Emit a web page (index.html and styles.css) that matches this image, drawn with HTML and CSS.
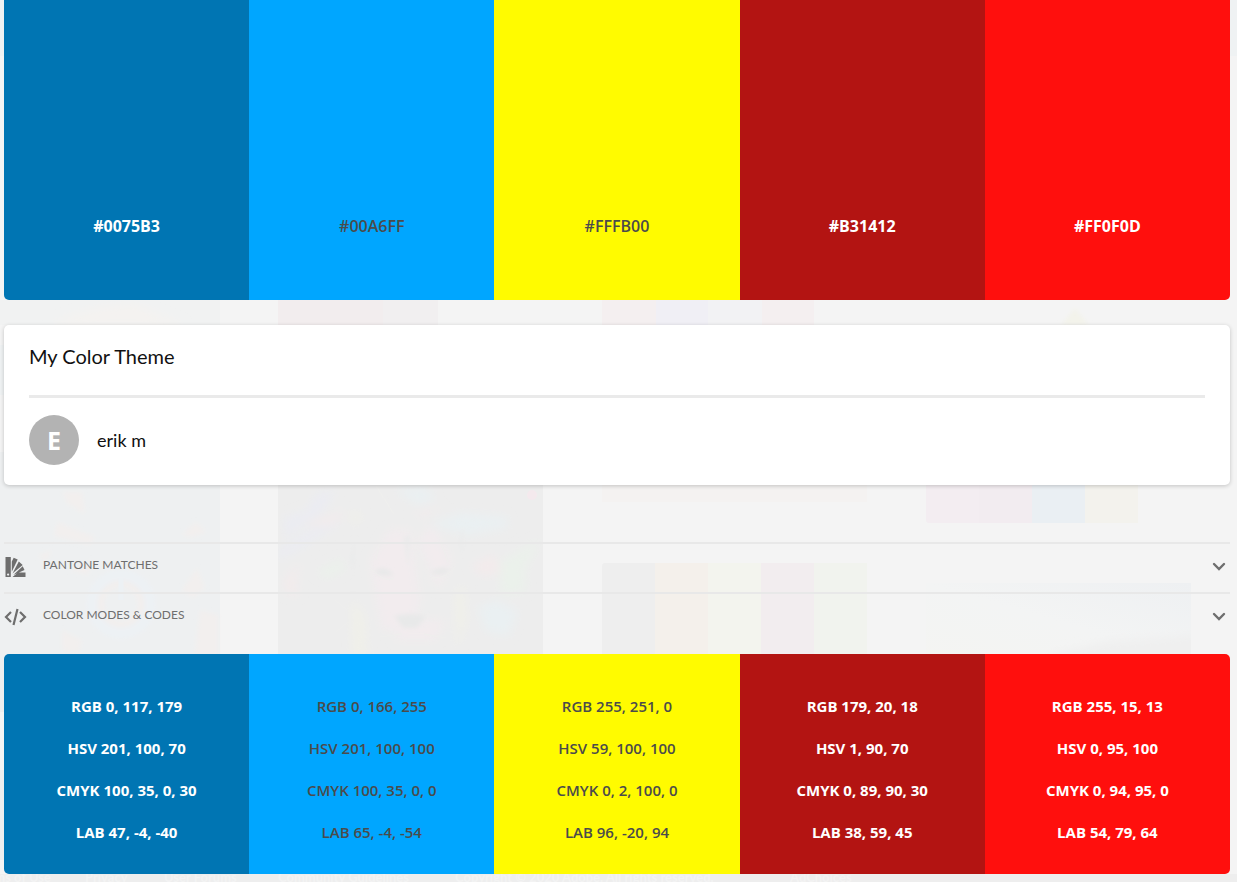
FILE: index.html
```
<!DOCTYPE html>
<html lang="en">
<head>
<meta charset="utf-8">
<title>My Color Theme</title>
<link rel="stylesheet" href="styles.css">
</head>
<body>
<svg class="backdrop" width="1237" height="882" viewBox="0 0 1237 882" aria-hidden="true">
  <defs>
    <filter id="soft" x="-20%" y="-20%" width="140%" height="140%"><feGaussianBlur stdDeviation="5"/></filter>
    <filter id="fine" x="-20%" y="-20%" width="140%" height="140%"><feGaussianBlur stdDeviation="2"/></filter>
    <clipPath id="lion"><rect x="278" y="480" width="265" height="180"/></clipPath>
    <clipPath id="photo"><rect x="926" y="583" width="265" height="77"/></clipPath>
    <linearGradient id="sky" x1="0" y1="1" x2="1" y2="0"><stop offset="0" stop-color="#f4f4f2"/><stop offset=".5" stop-color="#f3f4f4"/><stop offset="1" stop-color="#eef0f2"/></linearGradient>
  </defs>
  <path fill="#eff2f3" d="M0 0h4v56H0zM1230 0h7v56h-7zM0 345h4v50H0z"/>
  <path fill="#f1f2f2" d="M0 300h220v25H0z"/>
  <path fill="#f4f2f0" filter="url(#soft)" d="M50 325q40-20 85-20l50 20z"/>
  <path fill="#eef0f1" d="M0 452h220v208H0z"/>
  <g filter="url(#fine)" fill="#f2efee"><path d="M62 492h20l3 22-17-10zM57 522l38 15-5 8-36-9zM38 555l14-5-6 12zM182 535l14-13 10 10-14 5zM70 570l22-10-4 15zM182 590l15-22 8 20-12 10zM62 630l20 10-4 15-16-5zM200 610l18 5v45h-24z"/></g>
  <circle cx="121" cy="604" r="29" fill="#f2efee" stroke="#edf1f4" stroke-width="11" filter="url(#fine)"/>
  <circle cx="121" cy="604" r="17" fill="#eef0f1" filter="url(#fine)"/>
  <path d="M121 578v22" stroke="#edf1f4" stroke-width="5"/>
  <path fill="#f2edee" d="M278 300h105v25H278z"/>
  <path fill="#f1eff0" d="M383 300h55v25h-55z"/>
  <path fill="#f4eff0" d="M602 300h54v25h-54zM762 300h52v25h-52z"/>
  <path fill="#f0eff5" d="M656 300h52v25h-52z"/>
  <path fill="#f2f2f4" d="M708 300h54v25h-54z"/>
  <path fill="#f3f3eb" filter="url(#fine)" d="M1061 325l14-17 14 17z"/>
  <g clip-path="url(#lion)">
    <path fill="#ededed" d="M278 480h265v180H278z"/>
    <g filter="url(#soft)">
      <path fill="#ebecf2" d="M284 518l24-8 8-16 20-4-14 22-36 26zM278 550l36-22 30-7-40 25-26 14z"/>
      <path fill="#f3ebec" d="M302 524l46-13-16 14zM412 513l32-6-20 9zM471 566l22-12 10 18-20 4zM284 580l16-17-5 20 4 12-13-2z"/>
      <path fill="#eaf0f2" d="M430 524l32-11 44 4 2 10-40 8zM478 608l18-8 22 12-10 24-22-5zM395 490l30-3 10 12-16 6z"/>
      <path fill="#ebf1eb" d="M316 573l25-14 4 10-16 9zM500 562l40-23-16 32 2 20-25 5z"/>
      <path fill="#f2ecee" d="M370 560l20-30h20l10 70-8 30h-30zM418 540l14-15 20 35-14 30zM400 620h45l-10 20h-40z"/>
      <path fill="#f0f0e9" d="M352 600l12 15 3 45-14-5zM455 595l9-10 2 35-9 28zM350 513h12l-8 14z"/>
    </g>
    <g filter="url(#fine)">
      <path fill="#e8e9e9" d="M374 572q10-9 20 3-12 3-20-3zM430 573q10-8 20-3-8 8-20 3zM394 616q17-4 32 0l-9 12h-14z"/>
      <path fill="#eaebeb" d="M404 536h6l-2 32zM350 560l5-22-1 34zM459 544l4-18v28z"/>
    </g>
    <path fill="none" stroke="#efefed" d="M370 568q16 16 24 10M432 578q16 0 24-12M380 637l22-3M424 634l22 4M335 600l12 10M348 622l-12 10M380 540l-4 20M440 540l8 22M376 486l18 28"/>
    <circle cx="532" cy="495" r="5" fill="#f4e9ed"/>
  </g>
  <path fill="#f4f2f1" d="M602 480h265v22H602z"/>
  <path fill="#f3edf1" d="M926 480h53v43h-50q-3 0-3-3z"/>
  <path fill="#f2ecf0" d="M979 480h53v43h-53z"/>
  <path fill="#eaeff3" d="M1032 480h53v43h-53z"/>
  <path fill="#f3f2ed" d="M1085 480h53v43h-53z"/>
  <path fill="#eee" d="M602 566q0-3 3-3h50v97h-53z"/>
  <path fill="#f4f0eb" d="M655 563h53v97h-53z"/>
  <path fill="#f3f4ee" d="M708 563h53v97h-53z"/>
  <path fill="#f2edef" d="M761 563h53v97h-53z"/>
  <path fill="#f1f3ee" d="M814 563h53v97h-53z"/>
  <path fill="url(#sky)" d="M926 583h265v77H926z"/>
  <g clip-path="url(#photo)"><path fill="#efefef" filter="url(#soft)" d="M1050 655l60-14 90-6v30h-150z"/></g>
  <path fill="#eee" d="M0 660h4v52H0zM0 770h4v90H0zM0 874h1237v8H0z"/>
  <g class="footer-links">
    <text x="51" y="882" text-anchor="end">Terms of Use</text>
    <text x="85" y="882">Privacy</text>
    <text x="164" y="882">User Forums</text>
    <text x="278" y="882">Community Guidelines</text>
    <text x="455" y="882">Copyright © 2020 Adobe. All rights reserved.</text>
    <text x="790" y="882">AdChoices</text>
  </g>
</svg>
<main class="page">
  <ul class="swatches swatches-hex">
    <li class="swatch blue">#0075B3</li>
    <li class="swatch sky dark-text">#00A6FF</li>
    <li class="swatch yellow dark-text">#FFFB00</li>
    <li class="swatch crimson">#B31412</li>
    <li class="swatch red">#FF0F0D</li>
  </ul>

  <section class="card">
    <h1 class="card-title">My Color Theme</h1>
    <div class="author">
      <span class="avatar">E</span>
      <span class="author-name">erik m</span>
    </div>
  </section>

  <div class="panels">
    <button class="panel" type="button" aria-expanded="false">
      <svg class="panel-icon" viewBox="0 0 22 22" aria-hidden="true">
        <path fill="#6e6e6e" fill-rule="evenodd" d="M1 1h5.3v20H1zM3.6 17.5a1.1 1.1 0 1 0 0 2.2 1.1 1.1 0 0 0 0-2.2z"/>
        <path fill="#6e6e6e" d="M7.3 15.8V5.5l1.9-3.8 4 1.8zM8 17.4l6.3-11.8 3.9 3.3zM8.8 18.9l9.4-8.7 1.8 3.8zM8 21l5.6-4.4H21V21z"/>
      </svg>
      <span class="panel-label">PANTONE MATCHES</span>
      <svg class="chevron" viewBox="0 0 14 9" aria-hidden="true"><path d="M2 2l5 5 5-5"/></svg>
    </button>
    <button class="panel" type="button" aria-expanded="true">
      <svg class="panel-icon" viewBox="0 0 22 22" aria-hidden="true"><path fill="none" stroke="#6e6e6e" stroke-width="2.2" d="M6.5 6L1.5 11l5 5M15.5 6l5 5-5 5M13 3L9 19"/></svg>
      <span class="panel-label">COLOR MODES &amp; CODES</span>
      <svg class="chevron" viewBox="0 0 14 9" aria-hidden="true"><path d="M2 2l5 5 5-5"/></svg>
    </button>
  </div>

  <div class="swatches swatches-codes">
    <div class="swatch blue"><span>RGB 0, 117, 179</span><span>HSV 201, 100, 70</span><span>CMYK 100, 35, 0, 30</span><span>LAB 47, -4, -40</span></div>
    <div class="swatch sky dark-text"><span>RGB 0, 166, 255</span><span>HSV 201, 100, 100</span><span>CMYK 100, 35, 0, 0</span><span>LAB 65, -4, -54</span></div>
    <div class="swatch yellow dark-text"><span>RGB 255, 251, 0</span><span>HSV 59, 100, 100</span><span>CMYK 0, 2, 100, 0</span><span>LAB 96, -20, 94</span></div>
    <div class="swatch crimson"><span>RGB 179, 20, 18</span><span>HSV 1, 90, 70</span><span>CMYK 0, 89, 90, 30</span><span>LAB 38, 59, 45</span></div>
    <div class="swatch red"><span>RGB 255, 15, 13</span><span>HSV 0, 95, 100</span><span>CMYK 0, 94, 95, 0</span><span>LAB 54, 79, 64</span></div>
  </div>
</main>
</body>
</html>
```
FILE: styles.css
```
* { box-sizing: border-box; }
body {
  margin: 0;
  background: #f4f4f4;
  color: #111;
  font-family: Lato, "Open Sans", sans-serif;
  overflow: hidden;
}
.backdrop { position: absolute; top: 0; left: 0; z-index: -1; }
.footer-links { fill: #f3f3f3; font-size: 13px; font-weight: 700; }
.page { padding: 0 7px 8px 4px; }
.swatches {
  display: grid;
  grid-template-columns: repeat(5, 1fr);
  margin: 0;
  padding: 0;
  list-style: none;
  overflow: hidden;
  color: #fff;
  font-family: "Open Sans", sans-serif;
  font-size: 15px;
  font-weight: 700;
  line-height: 20px;
  text-align: center;
}
.swatches-hex { border-radius: 0 0 5px 5px; }
.swatches-hex .swatch { padding: 216px 0 64px; font-size: 16px; }
.swatches-codes { border-radius: 5px; }
.swatches-codes .swatch {
  display: flex;
  flex-direction: column;
  gap: 22px;
  padding: 42px 0 32px;
}
.blue { background: #0075b3; }
.sky { background: #00a6ff; }
.yellow { background: #fffb00; }
.crimson { background: #b31412; }
.red { background: #ff0f0d; }
.swatches .dark-text { color: #4b4b4b; font-weight: 600; }
.card {
  margin-top: 25px;
  padding: 16px 25px 20px;
  border-radius: 5px;
  background: #fff;
  box-shadow: 0 1px 4px rgba(0, 0, 0, .2);
}
.card-title {
  margin: 0;
  padding-bottom: 24px;
  border-bottom: 3px solid #eaeaea;
  font-size: 20px;
  font-weight: 400;
  line-height: 30px;
}
.author { display: flex; align-items: center; gap: 18px; margin-top: 17px; }
.avatar {
  width: 50px;
  height: 50px;
  border-radius: 50%;
  background: #b3b3b3;
  color: #fff;
  font-family: "Open Sans", sans-serif;
  font-size: 25px;
  font-weight: 700;
  line-height: 50px;
  text-align: center;
}
.author-name { font-size: 18px; }
.panels { margin: 57px 0 12px; }
.panel {
  display: flex;
  align-items: center;
  gap: 16px;
  width: 100%;
  height: 50px;
  padding: 0 4px 3px 0;
  border: 0;
  border-top: 2px solid #e8e8e8;
  background: none;
  color: #6e6e6e;
  font: 12px/20px Lato, "Open Sans", sans-serif;
}
.panel-label { padding-bottom: 3px; }
.panel-icon { width: 23px; height: 22px; }
.chevron {
  width: 14px;
  height: 9px;
  margin-left: auto;
  fill: none;
  stroke: #6e6e6e;
  stroke-width: 2.4;
  stroke-linecap: round;
}
```
